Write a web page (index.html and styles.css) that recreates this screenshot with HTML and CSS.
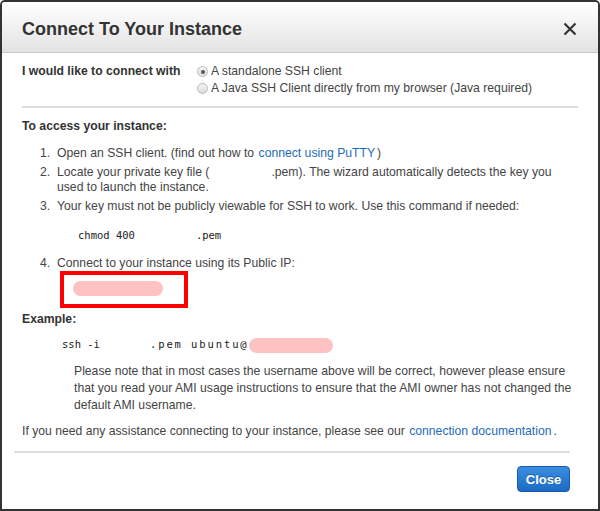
FILE: index.html
```html
<!DOCTYPE html>
<html>
<head>
<meta charset="utf-8">
<link rel="stylesheet" href="styles.css">
</head>
<body>
<div class="dialog">
  <div class="header">
    <h1 class="title">Connect To Your Instance</h1>
    <span class="close-x">
      <svg width="14" height="14" viewBox="0 0 14 14"><path d="M1.5 1.5 L12.5 12.5 M12.5 1.5 L1.5 12.5" stroke="#333" stroke-width="2.2" fill="none"/></svg>
    </span>
  </div>
  <div class="body">
    <div class="connect-row">
      <div class="connect-label">I would like to connect with</div>
      <div class="radios">
        <label class="radio"><span class="dot checked"></span>A standalone SSH client</label>
        <label class="radio"><span class="dot"></span>A Java SSH Client directly from my browser (Java required)</label>
      </div>
    </div>
    <hr class="divider">
    <div class="section-title">To access your instance:</div>
    <ol class="steps">
      <li><span class="num">1.</span><span>Open an SSH client. (find out how to <a class="link">connect using PuTTY</a>)</span></li>
      <li><span class="num">2.</span><span>Locate your private key file (<span class="blank-key"></span>.pem). The wizard automatically detects the key you used to launch the instance.</span></li>
      <li><span class="num">3.</span><span>Your key must not be publicly viewable for SSH to work. Use this command if needed:</span></li>
    </ol>
    <div class="code chmod">chmod 400<span class="blank-cmd"></span>.pem</div>
    <ol class="steps step4">
      <li><span class="num">4.</span><span>Connect to your instance using its Public IP:</span></li>
    </ol>
    <div class="ip-box"><span class="pill ip-pill"></span></div>
    <div class="section-title example">Example:</div>
    <div class="code ssh">ssh -i<span class="blank-ssh"></span><span class="wide">.pem ubuntu@</span><span class="pill ssh-pill"></span></div>
    <p class="note">Please note that in most cases the username above will be correct, however please ensure that you read your AMI usage instructions to ensure that the AMI owner has not changed the default AMI username.</p>
    <p class="help">If you need any assistance connecting to your instance, please see our <a class="link">connection documentation</a>.</p>
  </div>
  <div class="footer">
    <button class="btn-close">Close</button>
  </div>
</div>
</body>
</html>
```
FILE: styles.css
```css
* { box-sizing: border-box; }
html, body { margin: 0; padding: 0; background: #fff; }
body { font-family: "Liberation Sans", Arial, sans-serif; color: #444; font-size: 12.2px; }
.dialog {
  width: 600px; height: 511px;
  border: 2px solid #333;
  border-radius: 5px 5px 0 0;
  display: flex; flex-direction: column;
  overflow: hidden;
}
.header {
  height: 51px;
  background: linear-gradient(#ffffff, #e3e3e3);
  border-bottom: 1px solid #c8c8c8;
  display: flex; align-items: center; justify-content: space-between;
  padding: 0 21px 0 20px;
}
.title { margin: 0; font-size: 18px; font-weight: bold; color: #333; padding-top: 4px; }
.close-x { display: flex; padding-top: 4px; }
.body { padding: 0 20px; flex: 1; }
.connect-row { display: flex; padding-top: 11px; }
.connect-label { font-weight: bold; color: #333; width: 175px; line-height: 14px; }
.radios { display: flex; flex-direction: column; gap: 2px; }
.radio { display: flex; align-items: center; line-height: 15px; color: #444; }
.dot {
  width: 11px; height: 11px; border-radius: 50%;
  border: 1px solid #bbb; background: linear-gradient(#f4f4f4, #dcdcdc);
  margin-right: 3px; position: relative;
}
.dot.checked::after {
  content: ""; position: absolute; left: 2.5px; top: 2.5px; width: 4px; height: 4px; border-radius: 50%; background: #555;
}
.divider { border: 0; border-top: 2px solid #ddd; margin: 10px 0 0 0; }
.section-title { font-weight: bold; color: #333; margin-top: 11px; }
.steps { list-style: none; margin: 13px 0 0 0; padding: 0 0 0 18px; }
.steps li { display: flex; line-height: 15px; margin-bottom: 4px; }
.num { width: 17px; flex: none; }
.link { color: #1e6bb8; padding: 0 2px 0 1px; }
.blank-key { display: inline-block; width: 62px; }
.code { font-family: "DejaVu Sans Mono", monospace; font-size: 10.5px; color: #222; }
.chmod { margin: 15px 0 0 56px; }
.blank-cmd { display: inline-block; width: 61px; }
.step4 { margin-top: 15px; }
.ip-box {
  margin: -4px 0 0 38px; width: 128px; height: 37px;
  border: 4px solid #ff0000; padding: 6px 0 0 9px;
}
.pill { display: inline-block; background: #ffc2c2; border-radius: 8px; vertical-align: middle; }
.ip-pill { width: 90px; height: 15px; }
.example { margin-top: 4px; }
.ssh { margin: 11px 0 0 40px; line-height: 15px; }
.blank-ssh { display: inline-block; width: 50px; }
.wide { letter-spacing: 1.9px; }
.ssh-pill { width: 84px; height: 15px; }
.note { margin: 10px 0 0 52px; line-height: 17px; }
.help { margin: 10px 0 0 0; }
.footer {
  margin: 0 28px 0 12px; border-top: 2px solid #ddd;
  display: flex; justify-content: flex-end; padding: 13px 0 17px;
}
.btn-close {
  font-family: "Liberation Sans", Arial, sans-serif; font-weight: bold; font-size: 13px; color: #fff;
  width: 53px; height: 26px; border-radius: 4px;
  border: 1px solid #1559a8;
  background: linear-gradient(#3a8ee0, #1b6bc6);
  text-shadow: 0 -1px 0 rgba(0,0,0,0.3);
}
```
